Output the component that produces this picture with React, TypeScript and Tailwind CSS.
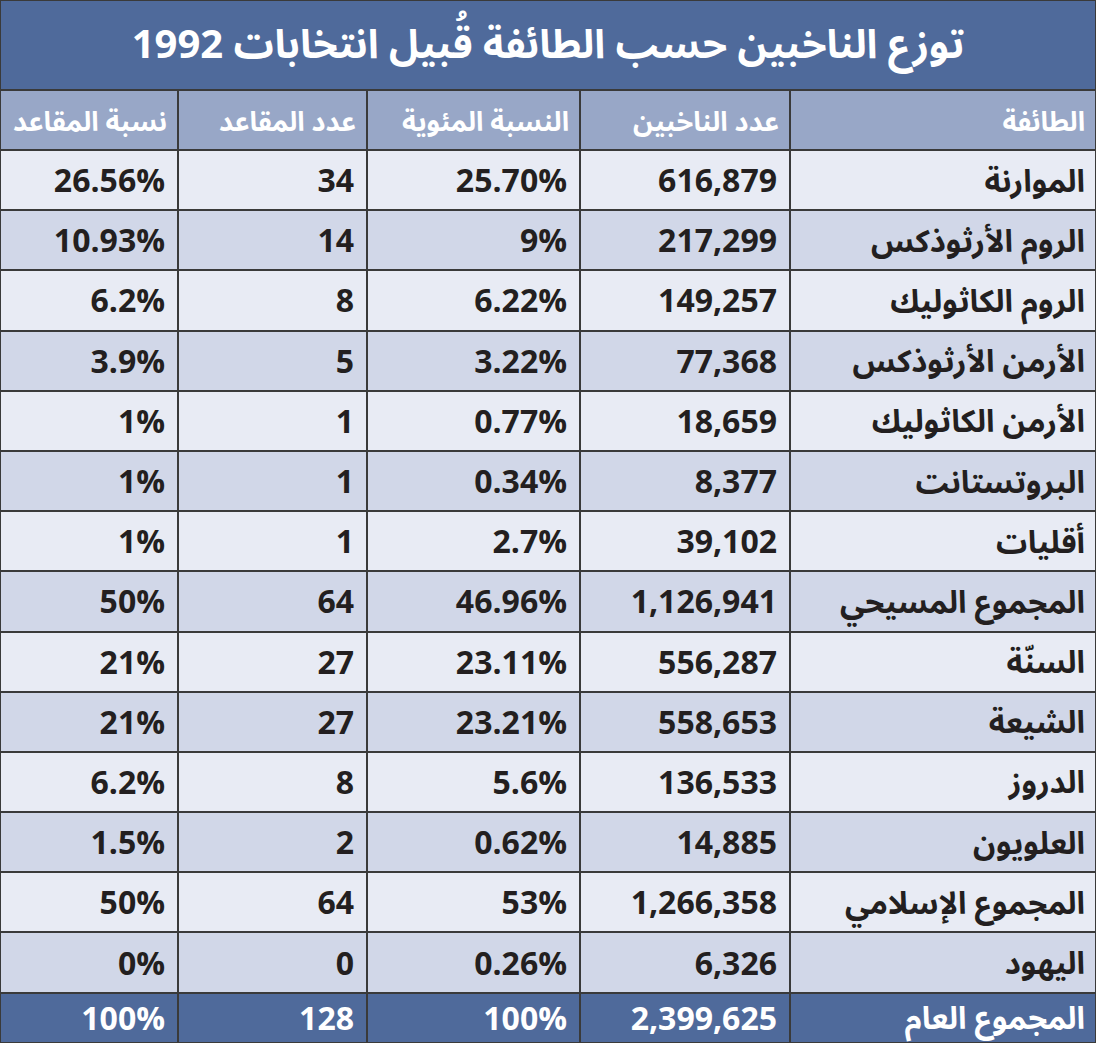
import React from "react";

const rows: [string, string, string, string, string][] = [
  ["الموارنة", "616,879", "25.70%", "34", "26.56%"],
  ["الروم الأرثوذكس", "217,299", "9%", "14", "10.93%"],
  ["الروم الكاثوليك", "149,257", "6.22%", "8", "6.2%"],
  ["الأرمن الأرثوذكس", "77,368", "3.22%", "5", "3.9%"],
  ["الأرمن الكاثوليك", "18,659", "0.77%", "1", "1%"],
  ["البروتستانت", "8,377", "0.34%", "1", "1%"],
  ["أقليات", "39,102", "2.7%", "1", "1%"],
  ["المجموع المسيحي", "1,126,941", "46.96%", "64", "50%"],
  ["السنّة", "556,287", "23.11%", "27", "21%"],
  ["الشيعة", "558,653", "23.21%", "27", "21%"],
  ["الدروز", "136,533", "5.6%", "8", "6.2%"],
  ["العلويون", "14,885", "0.62%", "2", "1.5%"],
  ["المجموع الإسلامي", "1,266,358", "53%", "64", "50%"],
  ["اليهود", "6,326", "0.26%", "0", "0%"],
];

const headers = ["الطائفة", "عدد الناخبين", "النسبة المئوية", "عدد المقاعد", "نسبة المقاعد"];

const ar = "font-['Open_Sans','Noto_Sans_Arabic','DejaVu_Sans',sans-serif]";

export default function App() {
  return (
    <div className="w-[1096px] h-[1043px] bg-[#3a3a3a] p-[1px] overflow-hidden">
      <div
        dir="rtl"
        className={`grid grid-cols-[304px_208px_211px_187px_176px] grid-rows-[88px_58px_repeat(14,58.2px)_48px] gap-[2px] ${ar}`}
      >
        <div className="col-span-5 bg-[#4f6a9b] flex items-center justify-center text-white font-bold text-[40px] leading-none pb-1">
          توزع الناخبين حسب الطائفة قُبيل انتخابات 1992
        </div>
        {headers.map((h) => (
          <div key={h} className="bg-[#98a7c7] flex items-center justify-start pr-[10px] text-white text-[27px] font-bold leading-none">
            {h}
          </div>
        ))}
        {rows.map((r, i) => {
          const bg = i % 2 === 0 ? "bg-[#e8ebf4]" : "bg-[#d1d7e8]";
          return (
            <React.Fragment key={i}>
              <div className={`${bg} flex items-center justify-start pr-[10px] text-[#231f20] text-[31px] font-bold leading-none`}>
                {r[0]}
              </div>
              {r.slice(1).map((v, j) => (
                <div key={j} className={`${bg} flex items-center justify-start pr-[12px] text-[#231f20] text-[32px] font-bold leading-none`}>
                  <span dir="ltr">{v}</span>
                </div>
              ))}
            </React.Fragment>
          );
        })}
        <div className="bg-[#4f6a9b] flex items-center justify-start pr-[10px] text-white text-[31px] font-bold leading-none">
          المجموع العام
        </div>
        {["2,399,625", "100%", "128", "100%"].map((v, j) => (
          <div key={j} className="bg-[#4f6a9b] flex items-center justify-start pr-[12px] text-white text-[32px] font-bold leading-none">
            <span dir="ltr">{v}</span>
          </div>
        ))}
      </div>
    </div>
  );
}
